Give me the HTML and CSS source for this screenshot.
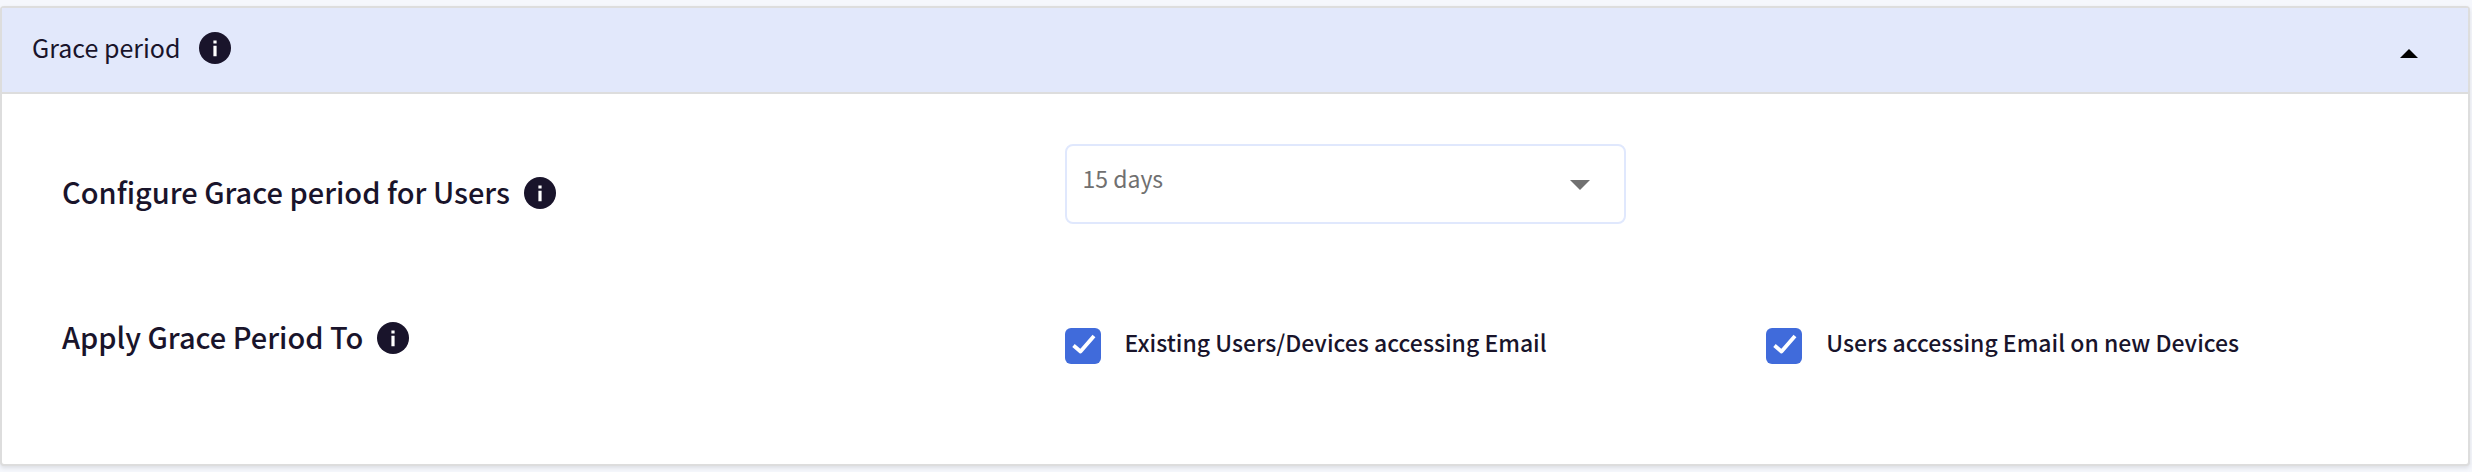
FILE: index.html
```html
<!DOCTYPE html>
<html lang="en">
<head>
<meta charset="UTF-8" />
<meta name="viewport" content="width=device-width, initial-scale=1" />
<title>Grace period</title>
<link rel="stylesheet" href="styles.css">
</head>
<body>
<section class="panel">
  <header class="panel-header">
    <h2 class="panel-title">Grace period</h2>
    <svg class="info" viewBox="0 0 32 32" aria-hidden="true"><circle cx="16" cy="16" r="16"/><path d="M14.4 8.5h3.2v3h-3.2zM14.4 13.8h3.2v10.4h-3.2z"/></svg>
    <button class="toggle" type="button" aria-label="Collapse">
      <svg viewBox="0 0 18 10"><path d="M9 0l9 9H0z"/></svg>
    </button>
  </header>

  <div class="panel-body">
    <div class="row">
      <div class="row-label">
        <label for="period">Configure Grace period for Users</label>
        <svg class="info" viewBox="0 0 32 32" aria-hidden="true"><circle cx="16" cy="16" r="16"/><path d="M14.4 8.5h3.2v3h-3.2zM14.4 13.8h3.2v10.4h-3.2z"/></svg>
      </div>
      <div class="select">
        <select id="period">
          <option>15 days</option>
        </select>
        <svg class="select-arrow" viewBox="0 0 20 10" aria-hidden="true"><path d="M0 0h20l-10 10z"/></svg>
      </div>
    </div>

    <div class="row">
      <div class="row-label">
        <span>Apply Grace Period To</span>
        <svg class="info" viewBox="0 0 32 32" aria-hidden="true"><circle cx="16" cy="16" r="16"/><path d="M14.4 8.5h3.2v3h-3.2zM14.4 13.8h3.2v10.4h-3.2z"/></svg>
      </div>
      <div class="check">
        <input type="checkbox" id="existing" checked />
        <label for="existing">Existing Users/Devices accessing Email</label>
      </div>
      <div class="check">
        <input type="checkbox" id="newDevices" checked />
        <label for="newDevices">Users accessing Email on new Devices</label>
      </div>
    </div>
  </div>
</section>
</body>
</html>
```

FILE: styles.css
```css
* {
  box-sizing: border-box;
}
body {
  margin: 0; padding: 6px 2px 6px 0; background: #f5f7fc; color: #19142b;
  font-family: "Source Sans Pro", "Noto Sans CJK SC", sans-serif;
}
.panel {
  background: #fff; border: 2px solid #ddd; border-radius: 4px;
  box-shadow: 0 2px 4px rgba(0, 0, 0, 0.1);
}
.panel-header {
  display: flex; align-items: center; gap: 18px;
  height: 86px; padding: 0 50px 4px 30px;
  background: #e2e8fb; border-bottom: 2px solid #ddd;
}
.panel-title {
  margin: 0; padding-bottom: 2px; font-size: 25px; font-weight: 400; line-height: 36px;
}
.info {
  flex: none; width: 32px; height: 32px; fill: #19142b;
}
.info path {
  fill: #fff;
}
.toggle {
  margin-left: auto; padding: 12px 0 0; border: 0; background: none; cursor: pointer;
}
.toggle svg {
  display: block; width: 18px; height: 10px; fill: #000;
}
.panel-body {
  padding: 50px 0 0 60px;
}
.row {
  display: grid; grid-template-columns: 10fr 7fr 7fr;
  min-height: 160px;
}
.row-label {
  display: flex; align-items: center; gap: 14px;
  height: 80px; padding-top: 18px;
  font-size: 29px; font-weight: 500; line-height: 40px;
}
.row-label label, .row-label span {
  padding-bottom: 4px;
}
.row + .row .row-label {
  padding-top: 0; height: 68px;
}
.select {
  position: relative; width: 80%; height: 80px;
}
.select select {
  appearance: none; width: 100%; height: 100%; padding: 0 60px 12px 16px;
  border: 2px solid #e0e8fd; border-radius: 8px; background: #fff;
  color: #707070; font-family: inherit; font-size: 23px;
}
.select-arrow {
  position: absolute; top: 36px; right: 36px; width: 20px; height: 10px;
  fill: #707070; pointer-events: none;
}
.check {
  display: flex; align-items: center; gap: 24px; height: 84px;
  font-size: 23px; font-weight: 500; line-height: 36px;
}
.check label {
  padding-bottom: 8px;
}
.check input {
  appearance: none; flex: none; width: 36px; height: 36px; margin: 0;
  border-radius: 6px; cursor: pointer;
}
.check input:checked {
  background: #406bdb url("data:image/svg+xml,%3Csvg xmlns='http://www.w3.org/2000/svg' viewBox='0 0 36 36'%3E%3Cpath d='M8.5 17.5l7 6L29 8' fill='none' stroke='%23fff' stroke-width='3.8' stroke-linejoin='round'/%3E%3C/svg%3E") center / 36px 36px no-repeat;
}
```
